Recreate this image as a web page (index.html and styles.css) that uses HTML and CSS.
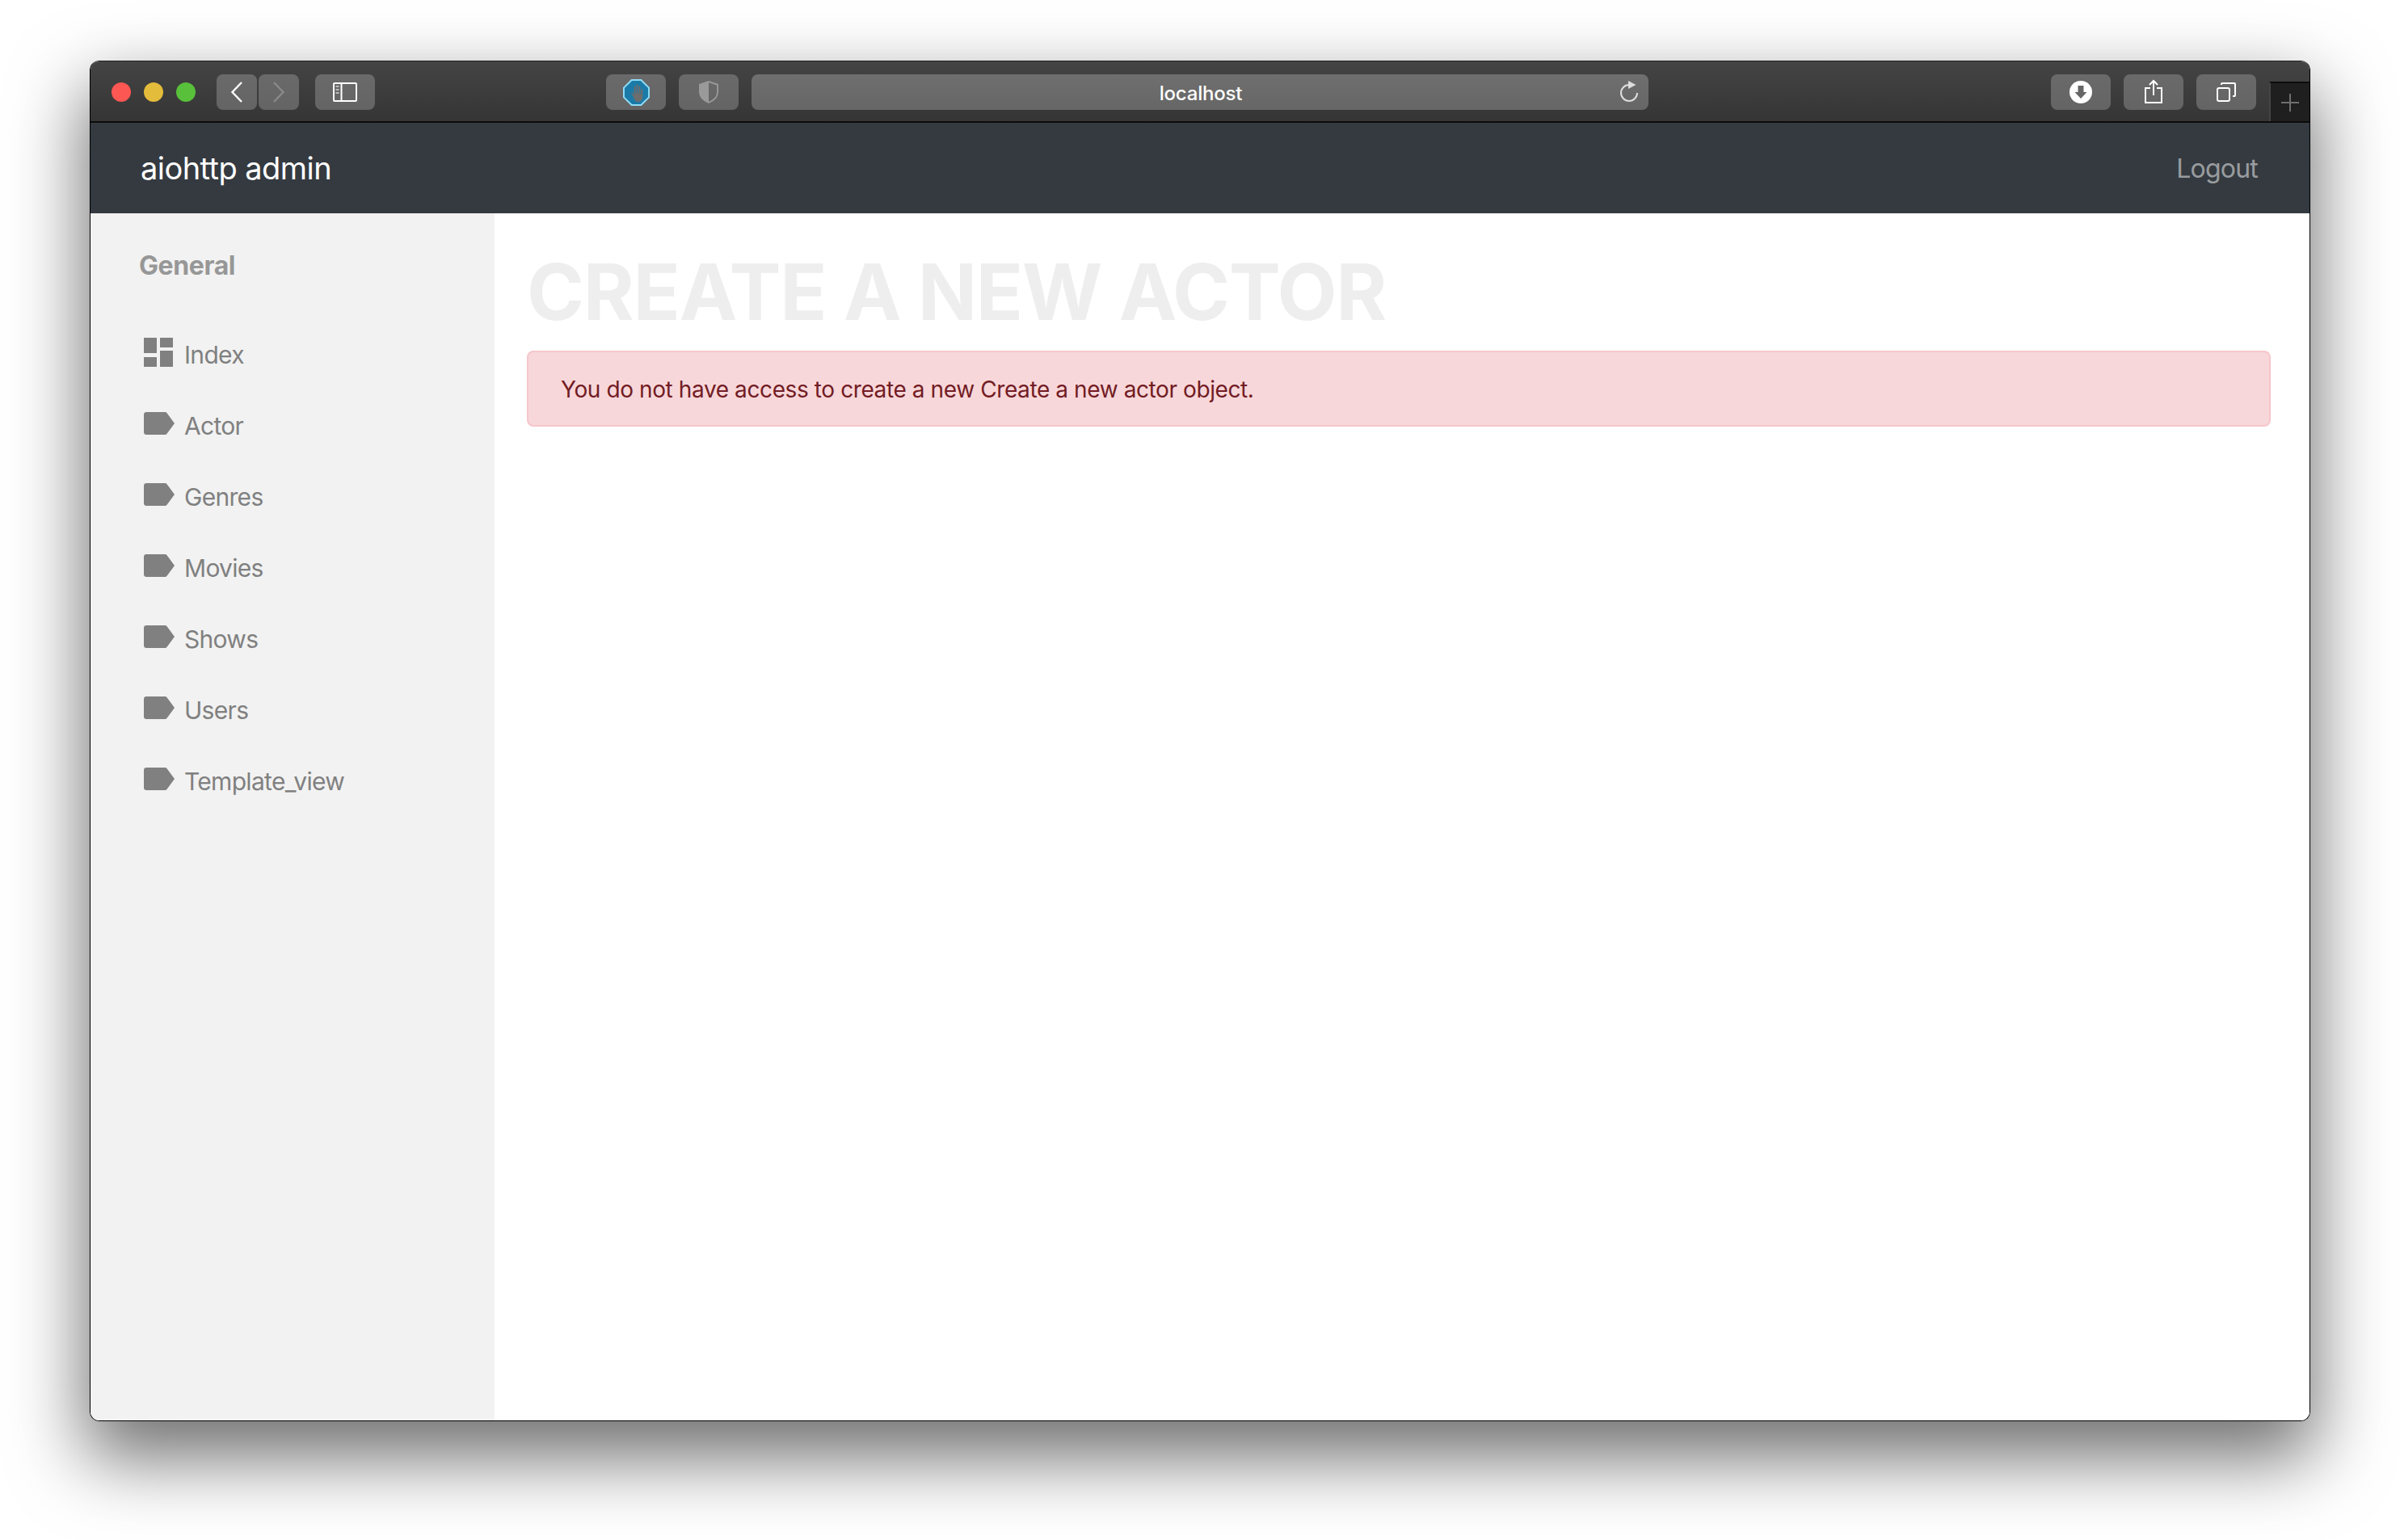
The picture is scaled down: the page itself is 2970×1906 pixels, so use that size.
FILE: index.html
```html
<!DOCTYPE html>
<html lang="en">
<head>
    <meta charset="UTF-8">
    <meta name="viewport" content="width=device-width, initial-scale=1.0">
    <title>aiohttp admin</title>
    <link rel="stylesheet" href="styles.css">
</head>
<body>

    <div class="window">

        <!-- Safari title bar -->
        <div class="titlebar">
            <div class="lights">
                <span class="light light-red"></span>
                <span class="light light-yellow"></span>
                <span class="light light-green"></span>
            </div>
            <div class="nav-arrows">
                <div class="tool tool-arrow">
                    <svg width="16" height="28" viewBox="0 0 16 28"><path d="M14 2 2.500 14 14 26" fill="none" stroke="#fff" stroke-width="2.400"/></svg>
                </div>
                <div class="tool tool-arrow">
                    <svg width="16" height="28" viewBox="0 0 16 28"><path d="M2 2l11.500 12L2 26" fill="none" stroke="#8a8a8a" stroke-width="2.400"/></svg>
                </div>
            </div>
            <div class="tool tool-sidebar">
                <svg width="30" height="24" viewBox="0 0 30 24"><rect x="1" y="1" width="28" height="22" rx="1" fill="none" stroke="#fff" stroke-width="2"/><path d="M10.500 1v22" stroke="#fff" stroke-width="2"/><path d="M3.500 5h4M3.500 9h4M3.500 13h4" stroke="#bbb" stroke-width="2"/></svg>
            </div>
            <div class="tool tool-block">
                <svg width="33" height="33" viewBox="0 0 34 34">
                    <path d="M11 1h12l10 10v12L23 33H11L1 23V11z" fill="#1b7ba8" stroke="#8fdcf5" stroke-width="2"/>
                    <path d="M10 17l3 5c1 4 3 7 6 7 4 0 6-3 6-7v-9h-2v6h-1V9h-2v9h-1V7h-2v11h-1V9h-2v11l-2-3z" fill="#6d6d6d"/>
                </svg>
            </div>
            <div class="tool tool-shield">
                <svg width="24" height="28" viewBox="0 0 26 30"><path d="M13 1l12 4v10c0 7-5 11-12 14C6 26 1 22 1 15V5z" fill="none" stroke="#9a9a9a" stroke-width="2"/><path d="M13 1L1 5v10c0 7 5 11 12 14z" fill="#9a9a9a"/></svg>
            </div>
            <div class="urlbar">
                <span class="url-text">localhost</span>
                <svg class="url-reload" width="24" height="28" viewBox="0 0 24 28"><path d="M12 5A10 10 0 1 0 22 15" fill="none" stroke="#ddd" stroke-width="2"/><path d="M11 0l9.500 5-9.500 5z" fill="#ddd"/></svg>
            </div>
            <div class="tool tool-right tool-download">
                <svg width="28" height="28" viewBox="0 0 28 28"><circle cx="14" cy="14" r="14" fill="#fff"/><path d="M10.500 6h7v8h4L14 22l-7.500-8h4z" fill="#666"/></svg>
            </div>
            <div class="tool tool-right">
                <svg width="24" height="32" viewBox="0 0 24 32"><path d="M8 11H2v18h20V11h-6" fill="none" stroke="#fff" stroke-width="2"/><path d="M12 20V2M7 7l5-5 5 5" fill="none" stroke="#fff" stroke-width="2"/></svg>
            </div>
            <div class="tool tool-right">
                <svg width="26" height="26" viewBox="0 0 26 26"><rect x="2" y="8" width="15" height="16" rx="2" fill="none" stroke="#fff" stroke-width="2"/><path d="M7 4V3a1 1 0 0 1 1-1h15a1 1 0 0 1 1 1v14a1 1 0 0 1-1 1h-2" fill="none" stroke="#fff" stroke-width="2"/></svg>
            </div>
            <div class="new-tab">
                <svg width="22" height="22" viewBox="0 0 22 22"><path d="M11 0v22M0 11h22" stroke="#6f6f6f" stroke-width="2"/></svg>
            </div>
        </div>

        <!-- Top navbar -->
        <div class="navbar">
            <a class="brand">aiohttp admin</a>
            <a class="logout">Logout</a>
        </div>

        <div class="page">
            <!-- Sidebar -->
            <div class="sidebar">
                <h6 class="side-title">General</h6>
                <ul class="menu">
                    <li class="menu-item">
                        <svg class="menu-icon" width="38" height="36" viewBox="0 0 38 36"><path d="M0 0h16v19H0zM20 0h16v12H20zM0 24h16v12H0zM20 16h16v20H20z" fill="#808080"/></svg>
                        Index
                    </li>
                    <li class="menu-item">
                        <svg class="menu-icon" width="38" height="36" viewBox="0 0 38 36"><use href="#tag"/></svg>
                        Actor
                    </li>
                    <li class="menu-item">
                        <svg class="menu-icon" width="38" height="36" viewBox="0 0 38 36"><use href="#tag"/></svg>
                        Genres
                    </li>
                    <li class="menu-item">
                        <svg class="menu-icon" width="38" height="36" viewBox="0 0 38 36"><use href="#tag"/></svg>
                        Movies
                    </li>
                    <li class="menu-item">
                        <svg class="menu-icon" width="38" height="36" viewBox="0 0 38 36"><use href="#tag"/></svg>
                        Shows
                    </li>
                    <li class="menu-item">
                        <svg class="menu-icon" width="38" height="36" viewBox="0 0 38 36"><use href="#tag"/></svg>
                        Users
                    </li>
                    <li class="menu-item">
                        <svg class="menu-icon" width="38" height="36" viewBox="0 0 38 36"><use href="#tag"/></svg>
                        Template_view
                    </li>
                </ul>
            </div>

            <!-- Main content -->
            <div class="content">
                <h1 class="page-title">Create a new actor</h1>
                <div class="alert">You do not have access to create a new Create a new actor object.</div>
            </div>
        </div>
    </div>

    <svg width="0" height="0" class="defs">
        <symbol id="tag" viewBox="0 0 38 36"><path d="M3 4h23c1 0 2 .5 2.600 1.300L38 18l-9.400 12.700c-.6.800-1.600 1.300-2.600 1.300H3c-1.700 0-3-1.300-3-3V7c0-1.700 1.300-3 3-3z" fill="#808080"/></symbol>
    </svg>

</body>
</html>
```

FILE: styles.css
```css
/* Page and window frame */
body {
    margin: 0;
    padding: 75px 111px 148px 111px;
    background-color: #fff;
    font-family: Inter, "Liberation Sans", sans-serif;
}

.window {
    height: 1682px;
    display: flex;
    flex-direction: column;
    border: 1px solid #000;
    border-top-color: #222;
    border-radius: 12px;
    overflow: hidden;
    box-shadow: 0 40px 90px 6px rgba(0, 0, 0, 0.56);
}

.defs {
    position: absolute;
}

/* Title bar */
.titlebar {
    height: 76px;
    flex-shrink: 0;
    display: flex;
    align-items: flex-start;
    padding-top: 16px;
    box-sizing: border-box;
    background: linear-gradient(#444, #353535);
    border-bottom: 2px solid #0c0c0c;
}

.lights {
    display: flex;
    gap: 16px;
    padding: 10px 0 0 26px;
    width: 156px;
    box-sizing: border-box;
}

.light {
    width: 24px;
    height: 24px;
    border-radius: 50%;
}

.light-red {
    background-color: #fc5753;
}

.light-yellow {
    background-color: #e4bc3b;
}

.light-green {
    background-color: #58c03a;
}

.tool {
    height: 44px;
    width: 74px;
    flex-shrink: 0;
    display: flex;
    align-items: center;
    justify-content: center;
    border-radius: 8px;
    background: linear-gradient(#6a6a6a, #646464);
}

.nav-arrows {
    display: flex;
    gap: 2px;
}

.tool-arrow {
    width: 50px;
}

.tool-sidebar {
    margin-left: 20px;
}

.tool-block {
    margin-left: 286px;
}

.tool-shield {
    margin-left: 16px;
}

.urlbar {
    position: relative;
    margin-left: 16px;
    width: 1110px;
    height: 44px;
    flex-shrink: 0;
    display: flex;
    align-items: center;
    justify-content: center;
    border-radius: 8px;
    background: linear-gradient(#6f6f6f, #666);
}

.url-text {
    padding: 2px 0 0 2px;
    color: #fff;
    font-size: 24px;
    font-weight: 500;
    letter-spacing: -0.2px;
}

.url-reload {
    position: absolute;
    right: 12px;
    top: 8px;
}

.tool-download {
    margin-left: 498px;
}

.tool-right + .tool-right {
    margin-left: 16px;
}

.new-tab {
    margin: 9px 0 0 16px;
    flex-grow: 1;
    height: 49px;
    display: flex;
    align-items: center;
    justify-content: center;
    background-color: #1f1f1f;
    border-top: 2px solid #0c0c0c;
    border-left: 2px solid #444;
    box-sizing: border-box;
}

/* Navbar */
.navbar {
    height: 112px;
    flex-shrink: 0;
    display: flex;
    align-items: center;
    justify-content: space-between;
    padding: 0 64px 0 62px;
    background-color: #343a40;
}

.brand {
    color: #fff;
    font-size: 38px;
    letter-spacing: -0.55px;
}

.logout {
    color: rgba(255, 255, 255, 0.5);
    font-size: 32px;
    letter-spacing: -0.8px;
}

/* Sidebar */
.page {
    flex-grow: 1;
    display: flex;
}

.sidebar {
    width: 500px;
    flex-shrink: 0;
    background-color: #f2f2f2;
    padding: 41px 0 0 60px;
    box-sizing: border-box;
}

.side-title {
    margin: 0 0 42px;
    color: #979797;
    font-size: 32px;
    font-weight: 700;
    line-height: 48px;
    letter-spacing: -0.4px;
}

.menu {
    list-style: none;
    margin: 0;
    padding: 0 0 0 6px;
}

.menu-item {
    height: 88px;
    display: flex;
    align-items: center;
    color: #808080;
    font-size: 30px;
    letter-spacing: -0.7px;
}

.menu-icon {
    margin-right: 12px;
    position: relative;
    top: -3px;
}

/* Main content */
.content {
    flex-grow: 1;
    padding: 44px 48px 0 40px;
    background-color: #fff;
}

.page-title {
    margin: 0 0 20px;
    color: #eee;
    font-size: 96px;
    font-weight: 700;
    line-height: 106px;
    letter-spacing: -1.25px;
    text-transform: uppercase;
}

.alert {
    padding: 25px 40px 23px;
    border: 2px solid #f5c6cb;
    border-radius: 8px;
    background-color: #f8d7da;
    color: #721c24;
    font-size: 28px;
    line-height: 42px;
    letter-spacing: -0.4px;
}
```
